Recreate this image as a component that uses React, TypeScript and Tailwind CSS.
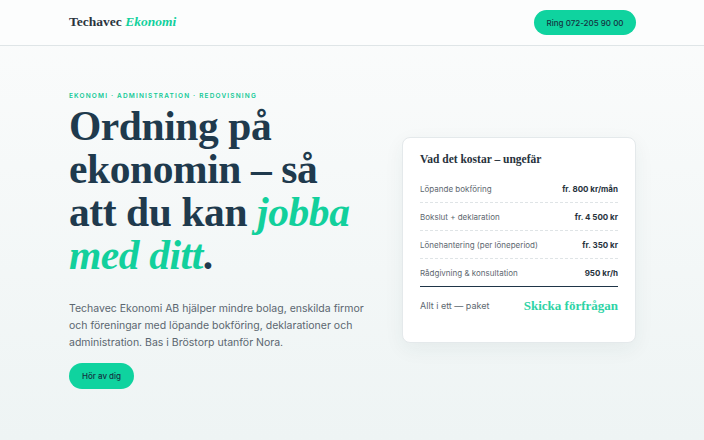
import React from 'react';

const prices = [
  { label: 'Löpande bokföring', value: 'fr. 800 kr/mån' },
  { label: 'Bokslut + deklaration', value: 'fr. 4 500 kr' },
  { label: 'Lönehantering (per löneperiod)', value: 'fr. 350 kr' },
  { label: 'Rådgivning & konsultation', value: '950 kr/h' },
];

const serif = "font-['Liberation_Serif','DejaVu_Serif',serif]";
const sans = "font-['Inter','Noto_Sans',sans-serif]";

export default function App() {
  return (
    <div className={`min-h-[440px] w-full bg-gradient-to-b from-[#fbfcfc] to-[#eef4f4] text-[#1f3547] ${sans}`}>
      {/* Top bar */}
      <header className="h-[46px] border-b border-[#dfe5e7] bg-[#fcfdfd]">
        <div className="mx-auto flex h-full w-[568px] items-center justify-between">
          <div className={`${serif} pl-[1px] text-[13.5px] font-bold text-[#2a343d]`}>
            Techavec <span className="italic text-[#12d09c]">Ekonomi</span>
          </div>
          <button className="h-[25px] w-[102px] rounded-full bg-[#0fd39f] text-[8px] font-medium text-[#14323f]">
            Ring 072-205 90 00
          </button>
        </div>
      </header>

      {/* Hero */}
      <main className="mx-auto flex w-[568px] items-center justify-between pt-[46px]">
        <section className="w-[300px] pl-[1px]">
          <p className="text-[6.5px] font-semibold uppercase tracking-[0.18em] text-[#12c996]">
            Ekonomi · Administration · Redovisning
          </p>
          <h1 className={`${serif} mt-[3px] text-[41.5px] font-bold leading-[43px] tracking-[-0.01em] text-[#1f3a4d]`}>
            Ordning på<br />
            ekonomin – så<br />
            att du kan <em className="text-[#12d09c]">jobba</em><br />
            <em className="text-[#12d09c]">med ditt</em>.
          </h1>
          <p className="mt-[23px] text-[10.5px] leading-[17px] text-[#5b6670]">
            Techavec Ekonomi AB hjälper mindre bolag, enskilda firmor<br />
            och föreningar med löpande bokföring, deklarationer och<br />
            administration. Bas i Bröstorp utanför Nora.
          </p>
          <button className="mt-[12px] h-[26px] w-[65px] rounded-full bg-[#0fd39f] text-[8px] font-medium text-[#14323f]">
            Hör av dig
          </button>
        </section>

        <aside className="mb-[1px] w-[234px] rounded-[8px] border border-[#e4e9eb] bg-white px-[17px] pt-[13px] pb-[26px] shadow-[0_6px_20px_rgba(30,60,70,0.06)]">
          <h2 className={`${serif} text-[11.5px] font-bold text-[#27323c]`}>Vad det kostar – ungefär</h2>
          <ul className="mt-[7px]">
            {prices.map((p, i) => (
              <li
                key={p.label}
                className={`flex h-[28px] items-center justify-between text-[8px] ${
                  i < prices.length - 1 ? 'border-b border-dashed border-[#dfe4e6]' : 'border-b border-[#1f3547]'
                }`}
              >
                <span className="text-[#5e6870]">{p.label}</span>
                <span className="font-bold text-[#27323c]">{p.value}</span>
              </li>
            ))}
          </ul>
          <div className="mt-[9px] flex items-center justify-between">
            <span className="text-[9px] text-[#5e6870]">Allt i ett — paket</span>
            <span className={`${serif} text-[13px] font-bold text-[#2dd3a5]`}>Skicka förfrågan</span>
          </div>
        </aside>
      </main>
    </div>
  );
}
